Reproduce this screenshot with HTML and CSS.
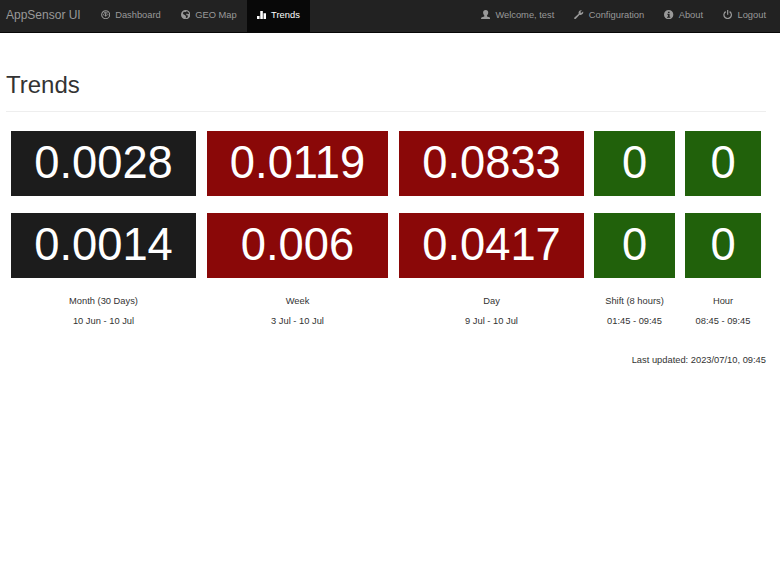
FILE: index.html
```html
<!DOCTYPE html>
<html lang="en">
<head>
<meta charset="utf-8">
<title>AppSensor UI</title>
<link rel="stylesheet" href="styles.css">
</head>
<body>
<nav class="navbar">
  <a class="brand">AppSensor UI</a>
  <a class="item"><svg viewBox="0 0 20 20"><circle class="line thin" cx="10" cy="10" r="8.600"/><path d="M4 9h2.500v2.500H4zM6 5h2.500v2.500H6zM11.500 5H14v2.500h-2.500zM13.500 9H16v2.500h-2.500zM9 4h2v5l1.500 3.500-2.500 2-2.500-2L9 9z"/></svg>Dashboard</a>
  <a class="item"><svg viewBox="0 0 20 20"><path fill-rule="evenodd" d="M10 0a10 10 0 1 0 0 20 10 10 0 0 0 0-20zM11 2.500l4 1.500 2.500 4-3 1-1.500-1.500-2 1 1 2.500 3 1-1 4-4 1.500 1-3-2-3.500-4-2-1-2 2-3.500 3 1 2-1z"/></svg>GEO Map</a>
  <a class="item active"><svg viewBox="0 0 20 20"><path d="M0 13h5.500v7H0zM7 2h5.500v18H7zM14 7h6v13h-6z"/></svg>Trends</a>
  <span class="spacer"></span>
  <a class="item"><svg viewBox="0 0 20 20"><path d="M10 0c3.700 0 5.500 2.200 5.500 5.500 0 2.500-.9 4.700-2.500 6v2.500l5 1.800c1.300.5 2 1.500 2 4.200H0c0-2.700.7-3.700 2-4.200L7 14v-2.500c-1.600-1.300-2.500-3.500-2.500-6C4.500 2.200 6.300 0 10 0z"/></svg>Welcome, test</a>
  <a class="item"><svg viewBox="0 0 20 20"><path d="M17 .8l-3.500 3.700 2 2L19.500 3c1.300 3.500-1 7.500-5 7.500-1 0-1.700-.2-2.400-.5L4 19C2 21-1 18 1 16L10 8C8.500 3.500 12.500-1 17 .8z"/></svg>Configuration</a>
  <a class="item"><svg viewBox="0 0 20 20"><path fill-rule="evenodd" d="M10 0a10 10 0 1 0 0 20 10 10 0 0 0 0-20zM8.500 3.500h3.500v3H8.500zM7 8h5v6.500h1.500v2h-7v-2H8.500V10H7z"/></svg>About</a>
  <a class="item"><svg viewBox="0 0 20 20"><path class="line" d="M5.800 3.500a8 8 0 1 0 8.400 0M10 0v10"/></svg>Logout</a>
</nav>
<main>
  <h1>Trends</h1>
  <section class="trends">
    <div class="tile dark">0.0028</div>
    <div class="tile red">0.0119</div>
    <div class="tile red">0.0833</div>
    <div class="tile green">0</div>
    <div class="tile green">0</div>
    <div class="tile dark">0.0014</div>
    <div class="tile red">0.006</div>
    <div class="tile red">0.0417</div>
    <div class="tile green">0</div>
    <div class="tile green">0</div>
    <div class="label">Month (30 Days)<br>10 Jun - 10 Jul</div>
    <div class="label">Week<br>3 Jul - 10 Jul</div>
    <div class="label">Day<br>9 Jul - 10 Jul</div>
    <div class="label">Shift (8 hours)<br>01:45 - 09:45</div>
    <div class="label">Hour<br>08:45 - 09:45</div>
  </section>
  <p class="updated">Last updated: 2023/07/10, 09:45</p>
</main>
</body>
</html>
```
FILE: styles.css
```css
* { box-sizing: border-box; }
body {
  margin: 0;
  background: #fff;
  color: #333;
  font: 9.33px/20px "Liberation Sans", Arial, sans-serif;
}
.navbar {
  display: flex;
  height: 33px;
  padding: 0 4px 0 6px;
  background: #222;
  border-bottom: 1px solid #080808;
  color: #999;
  line-height: 30px;
  white-space: nowrap;
}
.brand { font-size: 12px; padding-right: 10px; }
.item { display: flex; padding: 0 10px; }
.item svg {
  width: 9.33px;
  height: 9.33px;
  margin: 10px 5.1px 0 0;
  fill: currentColor;
}
.item .line { fill: none; stroke: currentColor; stroke-width: 2.6; }
.item .thin { stroke-width: 2.2; }
.active { background: #080808; color: #fff; }
.spacer { flex: 1; }
main { padding: 38px 14px 0 6px; }
h1 {
  margin: 0 0 19px;
  height: 41px;
  border-bottom: 1px solid #eee;
  font-size: 24px;
  font-weight: 400;
  line-height: 28px;
}
.trends {
  display: grid;
  grid-template-columns: 186px 182px 185px 81px 76px;
  column-gap: 10px;
  row-gap: 17px;
  margin-left: 5px;
}
.tile {
  height: 65px;
  color: #fff;
  font-size: 45.33px;
  line-height: 64px;
  text-align: center;
}
.trends > :nth-child(5n+1), .trends > :nth-child(5n+2) { margin-right: 1px; }
.dark { background: #1c1c1c; }
.red { background: #8a0808; }
.green { background: #21610b; }
.label { margin-top: -4px; text-align: center; white-space: nowrap; }
.updated { margin: 19px 0 0; text-align: right; }
```
